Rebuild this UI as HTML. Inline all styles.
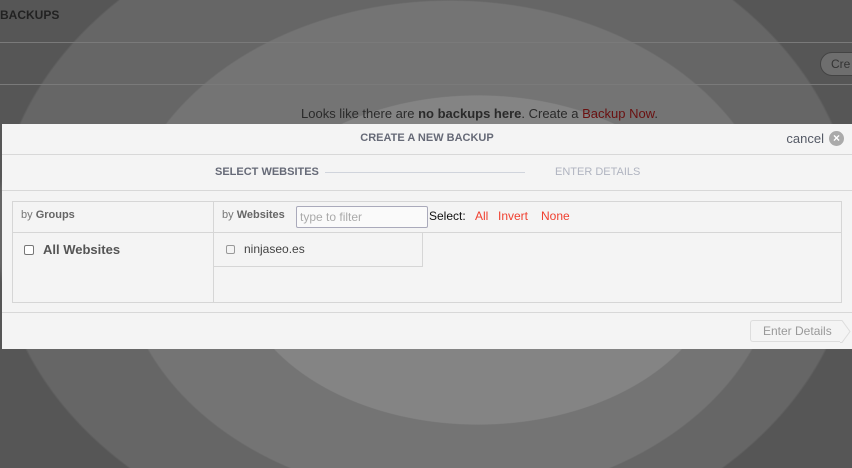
<!DOCTYPE html>
<html><head><meta charset="utf-8"><style>
*{margin:0;padding:0;box-sizing:border-box}
body{width:852px;height:468px;overflow:hidden;position:relative;font-family:"Liberation Sans",sans-serif;
background:
radial-gradient(ellipse 243px 165px at 478px 260px,#848484 99.5%,transparent 100%),
radial-gradient(ellipse 330px 250px at 450px 250px,#747474 99.5%,transparent 100%),
radial-gradient(ellipse 430px 330px at 426px 230px,#666 99.5%,transparent 100%),
#565656;}
.t{position:absolute;font-size:12px;color:#333}
.modal{position:absolute;left:2px;top:124px;width:850px;height:225px;background:#f4f4f4;}
.ln{position:absolute;left:0;right:0;height:1px;background:#d8d8d8}
</style></head><body>
<div class="t" style="left:0;top:8px;font-weight:bold;color:#222;font-size:12px">BACKUPS</div>
<div style="position:absolute;left:0;right:0;top:42px;height:1px;background:#7a7a7a"></div>
<div style="position:absolute;left:0;right:0;top:84px;height:1px;background:#7a7a7a"></div>
<div style="position:absolute;left:820px;top:52px;width:50px;height:24px;border:1px solid #444;border-radius:12px;background:#6e6e6e;font-size:12px;color:#333;padding:4px 0 0 10px">Cre</div>
<div class="t" style="left:301px;top:106px;color:#2a2a2a;font-size:13px">Looks like there are <b>no backups here</b>. Create a <span style="color:#6a1010">Backup Now</span>.</div>
<div class="modal">
 <div style="position:absolute;left:0;right:0;top:8px;text-align:center;font-size:11px;font-weight:bold;color:#666a77">CREATE A NEW BACKUP</div>
 <div style="position:absolute;right:28px;top:7px;font-size:13px;color:#555a66">cancel</div>
 <div style="position:absolute;right:8px;top:7px;width:15px;height:15px;border-radius:50%;background:#aaa;color:#fff;font-size:12px;line-height:15px;text-align:center;font-weight:bold">×</div>
 <div class="ln" style="top:30px"></div>
 <div style="position:absolute;left:213px;top:42px;font-size:11px;font-weight:bold;color:#666a77">SELECT WEBSITES</div>
 <div style="position:absolute;left:323px;top:48px;width:200px;height:1px;background:#d0d4dc"></div>
 <div style="position:absolute;left:553px;top:42px;font-size:11px;color:#b0b4c0">ENTER DETAILS</div>
 <div class="ln" style="top:66px"></div>
 <div style="position:absolute;left:10px;top:77px;width:830px;height:102px;border:1px solid #d6d6d6">
  <div style="position:absolute;left:0;right:0;top:30px;height:1px;background:#d6d6d6"></div>
  <div style="position:absolute;left:200px;top:0;bottom:0;width:1px;background:#d6d6d6"></div>
  <div style="position:absolute;left:8px;top:7px;font-size:11px;color:#777">by <b style="color:#666">Groups</b></div>
  <div style="position:absolute;left:11px;top:43px;width:10px;height:10px;border:1px solid #777;border-radius:2px;background:#fff"></div>
  <div style="position:absolute;left:30px;top:40px;font-size:13px;font-weight:bold;color:#555">All Websites</div>
  <div style="position:absolute;left:209px;top:7px;font-size:11px;color:#777">by <b style="color:#666">Websites</b></div>
  <div style="position:absolute;left:283px;top:4px;width:132px;height:22px;border:1px solid #aab;border-radius:2px;background:#fafafa;font-size:12px;color:#aaa;padding:3px 3px">type to filter</div>
  <div style="position:absolute;left:416px;top:7px;font-size:12px;color:#111">Select:</div>
  <div style="position:absolute;left:462px;top:7px;font-size:12px;color:#f04030">All</div>
  <div style="position:absolute;left:485px;top:7px;font-size:12px;color:#f04030">Invert</div>
  <div style="position:absolute;left:528px;top:7px;font-size:12px;color:#f04030">None</div>
  <div style="position:absolute;left:200px;top:30px;width:210px;height:35px;border-right:1px solid #d6d6d6;border-bottom:1px solid #d6d6d6"></div>
  <div style="position:absolute;left:213px;top:43px;width:9px;height:9px;border:1px solid #999;border-radius:2px"></div>
  <div style="position:absolute;left:231px;top:40px;font-size:12px;color:#444">ninjaseo.es</div>
 </div>
 <div class="ln" style="top:188px"></div>
 <div style="position:absolute;left:748px;top:196px;width:92px;height:22px;border:1px solid #ddd;border-right:none;border-radius:3px 0 0 3px;font-size:12px;color:#999;padding:3px 0 0 12px">Enter Details</div>
 <svg style="position:absolute;left:838px;top:196px" width="12" height="23"><path d="M0 0.5 L2 0.5 L10 11.5 L2 22.5 L0 22.5" fill="#f4f4f4" stroke="#ddd"/></svg>
</div>
</body></html>
